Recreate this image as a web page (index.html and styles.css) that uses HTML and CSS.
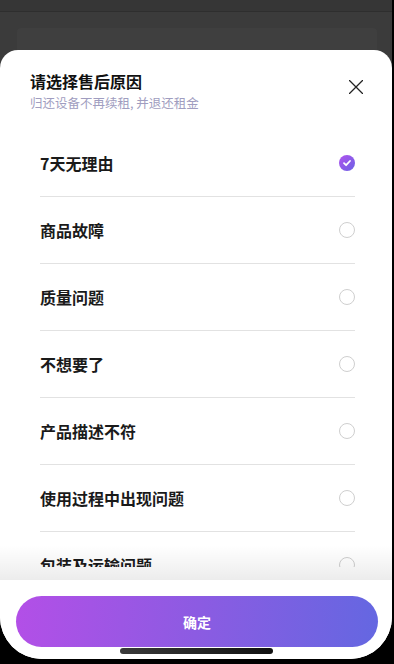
FILE: index.html
```html
<!DOCTYPE html>
<html lang="zh-CN">
<head>
<meta charset="utf-8">
<title>请选择售后原因</title>
<link rel="stylesheet" href="styles.css">
</head>
<body>
<div class="screen">
  <div class="backdrop">
    <div class="topbar"></div>
    <div class="page-card"></div>
  </div>
  <div class="sheet">
    <div class="sheet-header">
      <div class="titles">
        <div class="title">请选择售后原因</div>
        <div class="subtitle">归还设备不再续租, 并退还租金</div>
      </div>
      <svg class="close" width="14" height="14" viewBox="0 0 14 14">
        <path d="M0.5 0.5 L13.5 13.5 M13.5 0.5 L0.5 13.5" stroke="#222" stroke-width="1.3" fill="none" stroke-linecap="round"/>
      </svg>
    </div>
    <div class="list">
      <div class="row"><span class="label">7天无理由</span>
        <span class="radio checked"><svg width="16" height="16" viewBox="0 0 16 16"><path d="M5 8.2 L7.1 10.2 L11 6" stroke="#fff" stroke-width="1.8" fill="none" stroke-linecap="round" stroke-linejoin="round"/></svg></span>
      </div>
      <div class="row"><span class="label">商品故障</span><span class="radio"></span></div>
      <div class="row"><span class="label">质量问题</span><span class="radio"></span></div>
      <div class="row"><span class="label">不想要了</span><span class="radio"></span></div>
      <div class="row"><span class="label">产品描述不符</span><span class="radio"></span></div>
      <div class="row"><span class="label">使用过程中出现问题</span><span class="radio"></span></div>
      <div class="row"><span class="label">包装及运输问题</span><span class="radio"></span></div>
    </div>
    <div class="fade"></div>
    <div class="footer">
      <button class="confirm">确定</button>
      <div class="home-indicator"></div>
    </div>
  </div>
</div>
</body>
</html>
```

FILE: styles.css
```css
html, body {
  margin: 0;
  padding: 0;
  background: #000;
  height: 664px;
  overflow: hidden;
}

body {
  font-family: "Noto Sans CJK SC", "Noto Sans", sans-serif;
}

.screen {
  width: 392px;
  height: 659px;
  background: #3b3b3b;
  border-radius: 0 0 42px 42px;
  overflow: hidden;
  display: flex;
  flex-direction: column;
}

.backdrop {
  height: 50px;
  flex: none;
  display: flex;
  flex-direction: column;
}

.topbar {
  height: 11px;
  background: #363636;
  border-bottom: 1px solid #2e2e2e;
}

.page-card {
  margin: 16px 15px 0 17px;
  flex: 1;
  background: #3f3f3f;
  border-radius: 4px 4px 0 0;
}

.sheet {
  position: relative;
  flex: 1;
  background: #fff;
  border-radius: 18px 18px 0 0;
  display: flex;
  flex-direction: column;
}

.sheet-header {
  display: flex;
  justify-content: space-between;
  align-items: flex-start;
  padding: 20px 29px 18px 30px;
  height: 42px;
}

.title {
  font-size: 16px;
  line-height: 22px;
  font-weight: 700;
  color: #111;
}

.subtitle {
  margin-top: 2px;
  font-size: 12.5px;
  line-height: 18px;
  color: #a09dc0;
}

.close {
  margin-top: 10px;
}

.list {
  height: 437px;
  overflow: hidden;
  padding: 0 37px 0 40px;
  flex: none;
}

.row {
  height: 66px;
  border-bottom: 1px solid #e2e2e2;
  display: flex;
  align-items: center;
  justify-content: space-between;
}

.label {
  font-size: 16px;
  font-weight: 700;
  color: #1a1a1a;
}

.radio {
  width: 14px;
  height: 14px;
  border: 1px solid #cfcfcf;
  border-radius: 50%;
  flex: none;
}

.radio.checked {
  width: 16px;
  height: 16px;
  border: none;
  background: linear-gradient(135deg, #b154ee, #6a61e4);
}

.radio.checked svg {
  display: block;
}

.fade {
  position: absolute;
  left: 0;
  right: 0;
  top: 495px;
  height: 35px;
  background: linear-gradient(to bottom, rgba(0, 0, 0, 0), rgba(0, 0, 0, 0.075));
  pointer-events: none;
}

.footer {
  flex: 1;
  display: flex;
  flex-direction: column;
  align-items: center;
  padding-top: 29px;
  background: #fff;
}

.confirm {
  align-self: stretch;
  margin: 0 14px 0 16px;
  height: 51px;
  border: none;
  border-radius: 26px;
  background: linear-gradient(95deg, #b34fe7 0%, #8c5be2 50%, #6467e1 100%);
  color: #fff;
  font-family: "Noto Sans CJK SC", "Noto Sans", sans-serif;
  font-size: 14px;
  font-weight: 700;
}

.home-indicator {
  margin-top: 1px;
  width: 153px;
  height: 6px;
  border-radius: 3px;
  background: linear-gradient(to right, #3a3a3a, #111);
}
```
